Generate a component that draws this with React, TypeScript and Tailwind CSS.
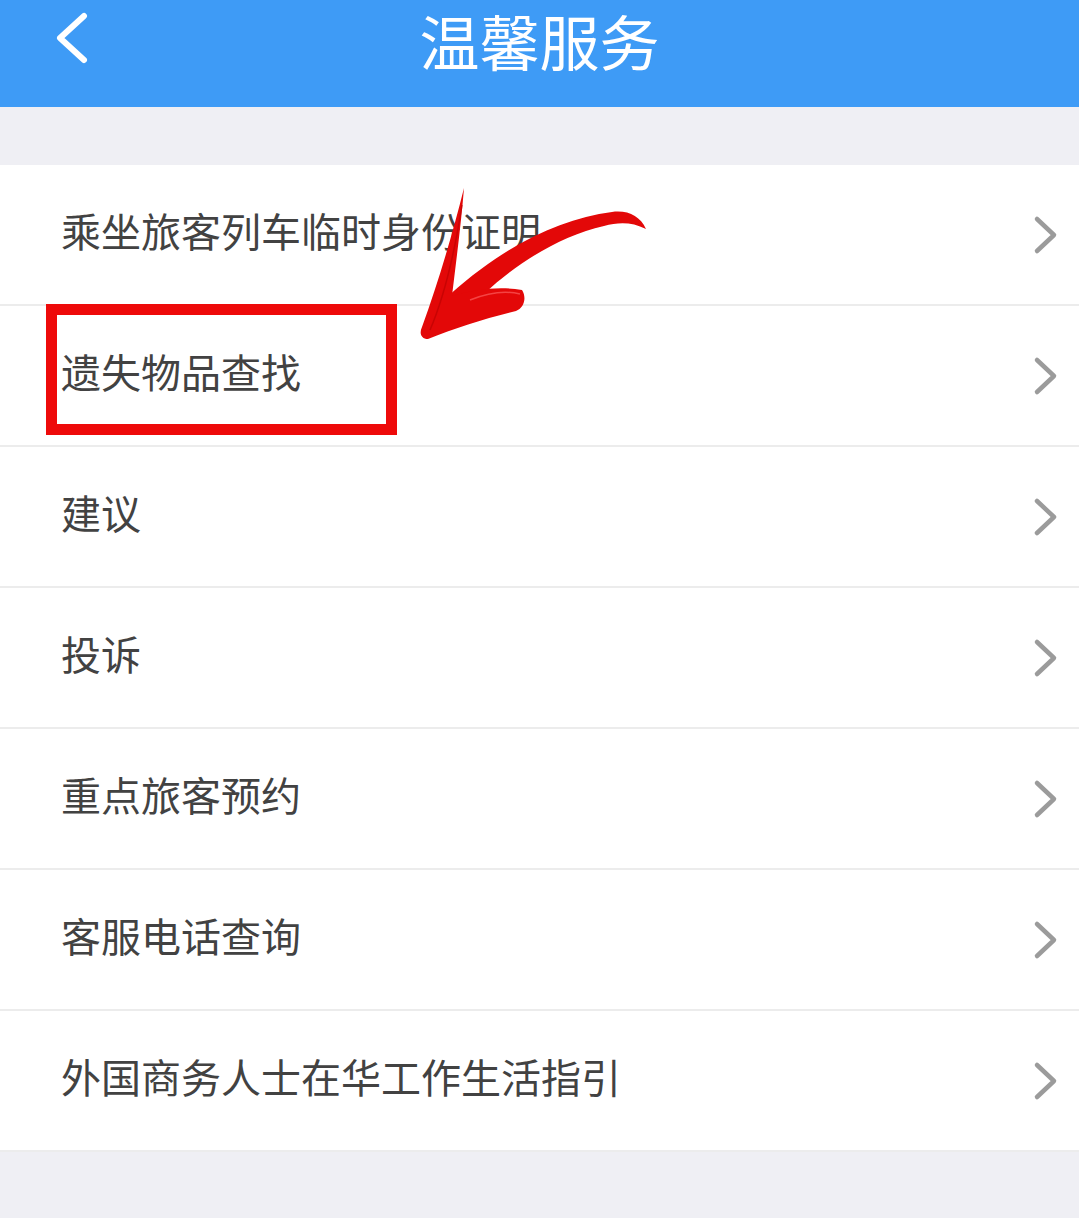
import React from 'react';

const items = [
  '乘坐旅客列车临时身份证明',
  '遗失物品查找',
  '建议',
  '投诉',
  '重点旅客预约',
  '客服电话查询',
  '外国商务人士在华工作生活指引',
];

const font = { fontFamily: '"Noto Sans CJK SC", "Noto Sans", sans-serif' };

function Chevron() {
  return (
    <svg width="26" height="40" viewBox="0 0 26 40" className="shrink-0">
      <path d="M4 4 L21 20 L4 36" fill="none" stroke="#9b9b9b" strokeWidth="4.5" strokeLinecap="round" strokeLinejoin="round" />
    </svg>
  );
}

function Row({ label }: { label: string }) {
  return (
    <div className="flex h-[141px] items-center justify-between border-b-[2px] border-[#ececec] bg-white pl-[61px] pr-[20px]">
      <span className="-mt-[10px] text-[40px] leading-[1.3] text-[#424242]">{label}</span>
      <Chevron />
    </div>
  );
}

export default function App() {
  return (
    <div className="relative min-h-[1218px] w-[1079px] bg-[#efeff4]" style={font}>
      {/* header */}
      <div className="relative flex h-[107px] justify-center bg-[#3e9bf6] pt-[2px]">
        <svg width="40" height="52" viewBox="0 0 40 52" className="absolute left-[52px] top-[12px]">
          <path d="M32 4 L8 26 L32 48" fill="none" stroke="#ffffff" strokeWidth="6" strokeLinecap="round" strokeLinejoin="round" />
        </svg>
        <h1 className="text-[60px] leading-[76px] font-normal text-white">温馨服务</h1>
      </div>

      <div className="h-[58px]" />

      <div className="flex flex-col">
        {items.map((label) => (
          <Row key={label} label={label} />
        ))}
      </div>

      {/* annotation overlay */}
      <div className="pointer-events-none absolute left-[46px] top-[304px] h-[131px] w-[351px] border-[11px] border-[#ee0a0a]" />
      <svg className="pointer-events-none absolute left-0 top-0" width="1079" height="1218" viewBox="0 0 1079 1218">
        {/* shaft */}
        <path
          d="M444 300 C 495 252 555 219 612 212 C 628 210 640 216 646 229 C 632 222 619 222 604 226 C 552 238 502 272 460 318 Z"
          fill="#e30808"
        />
        {/* head */}
        <path
          d="M464 188 C 461 225 456 262 452 296 C 475 289 500 286 522 290 C 527 298 524 308 516 311 C 487 318 455 328 428 339 C 421 339 419 333 422 327 C 438 283 452 236 464 188 Z"
          fill="#e30808"
        />
        <path d="M462 205 C 455 250 445 295 430 330" fill="none" stroke="#b80000" strokeWidth="1.5" opacity="0.6" />
        <path d="M470 300 C 490 292 508 291 520 294" fill="none" stroke="#ff6a6a" strokeWidth="1.5" opacity="0.6" />
      </svg>
    </div>
  );
}
